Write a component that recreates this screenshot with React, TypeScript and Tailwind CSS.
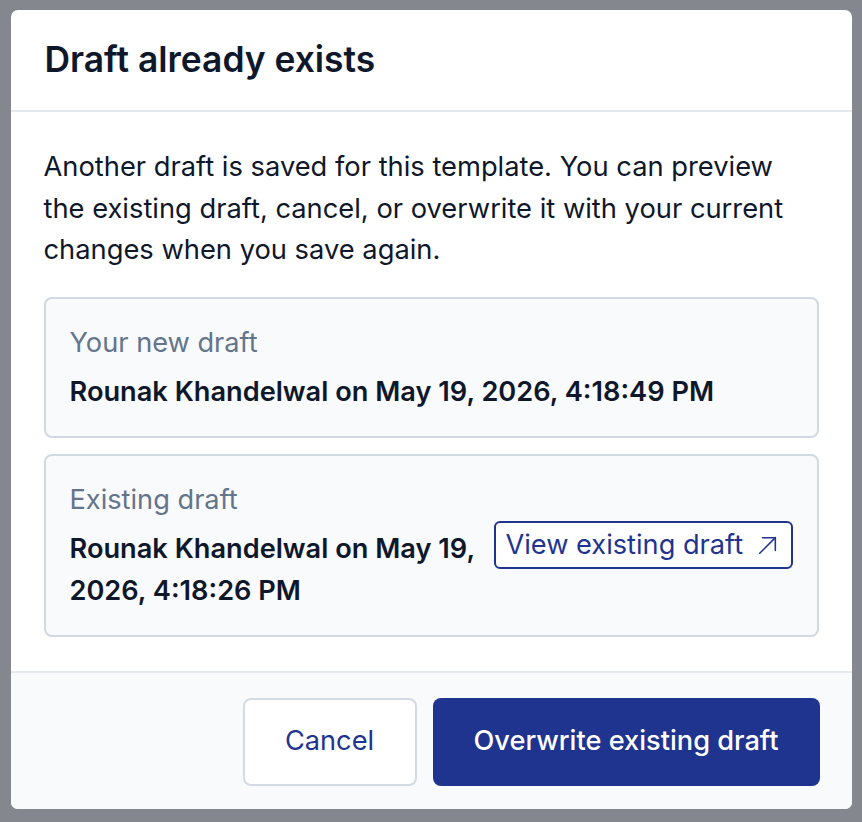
import React from 'react';

const ArrowUpRight = () => (
  <svg width="22" height="22" viewBox="0 0 24 24" fill="none" stroke="currentColor" strokeWidth="1.7" strokeLinecap="round" strokeLinejoin="round">
    <path d="M3 21 20 4" />
    <path d="M6 4h14v14" />
  </svg>
);

const DraftCard = ({ children }: { children: React.ReactNode }) => (
  <div className="rounded-[8px] border-2 border-[#d2d9e3] bg-[#f8fafc] px-[24px] py-[23px]">{children}</div>
);

export default function App() {
  return (
    <div
      className="flex min-h-screen w-full items-start justify-center bg-[#85878f] p-[10px]"
      style={{ fontFamily: 'Inter, "Noto Sans", sans-serif' }}
    >
      <div className="flex w-[841px] flex-col overflow-hidden rounded-[7px] bg-white">
        <header className="border-b-2 border-[#e4e9f0] px-[34px] py-[29px]">
          <h1 className="text-[35.4px] font-semibold leading-[42px] text-[#0f172a]">Draft already exists</h1>
        </header>

        <section className="flex flex-col px-[33px] pb-[34px] pt-[34px]">
          <p className="text-[27.3px] leading-[41.5px] text-[#0f172a]">
            Another draft is saved for this template. You can preview the existing draft, cancel, or
            overwrite it with your current changes when you save again.
          </p>

          <div className="mt-[26px] flex flex-col gap-[16px]">
            <DraftCard>
              <div className="flex flex-col gap-[7px]">
                <div className="text-[27.2px] leading-[42px] text-[#64748b]">Your new draft</div>
                <div className="text-[27.2px] font-semibold leading-[42px] text-[#0f172a]">
                  Rounak Khandelwal on May 19, 2026, 4:18:49 PM
                </div>
              </div>
            </DraftCard>

            <DraftCard>
              <div className="flex items-center gap-[16px]">
                <div className="flex flex-1 flex-col gap-[7px]">
                  <div className="text-[27.2px] leading-[42px] text-[#64748b]">Existing draft</div>
                  <div className="text-[27.2px] font-semibold leading-[42px] text-[#0f172a]">
                    Rounak Khandelwal on May 19, 2026, 4:18:26 PM
                  </div>
                </div>
                <button className="flex h-[48px] w-[299px] shrink-0 items-center justify-between rounded-[6px] border-2 border-[#1f348f] bg-white pl-[10px] pr-[12px] text-[27.2px] leading-none text-[#1f348f]">
                  View existing draft
                  <ArrowUpRight />
                </button>
              </div>
            </DraftCard>
          </div>
        </section>

        <footer className="flex justify-end gap-[16px] border-t-2 border-[#e4e9f0] bg-[#f8fafc] px-[32px] pb-[23px] pt-[25px]">
          <button className="h-[88px] w-[174px] rounded-[8px] border-2 border-[#d3dae4] bg-white text-[27.2px] text-[#1f348f]">
            Cancel
          </button>
          <button className="h-[88px] w-[387px] rounded-[8px] bg-[#1f348f] text-[27.2px] font-medium text-white">
            Overwrite existing draft
          </button>
        </footer>
      </div>
    </div>
  );
}
